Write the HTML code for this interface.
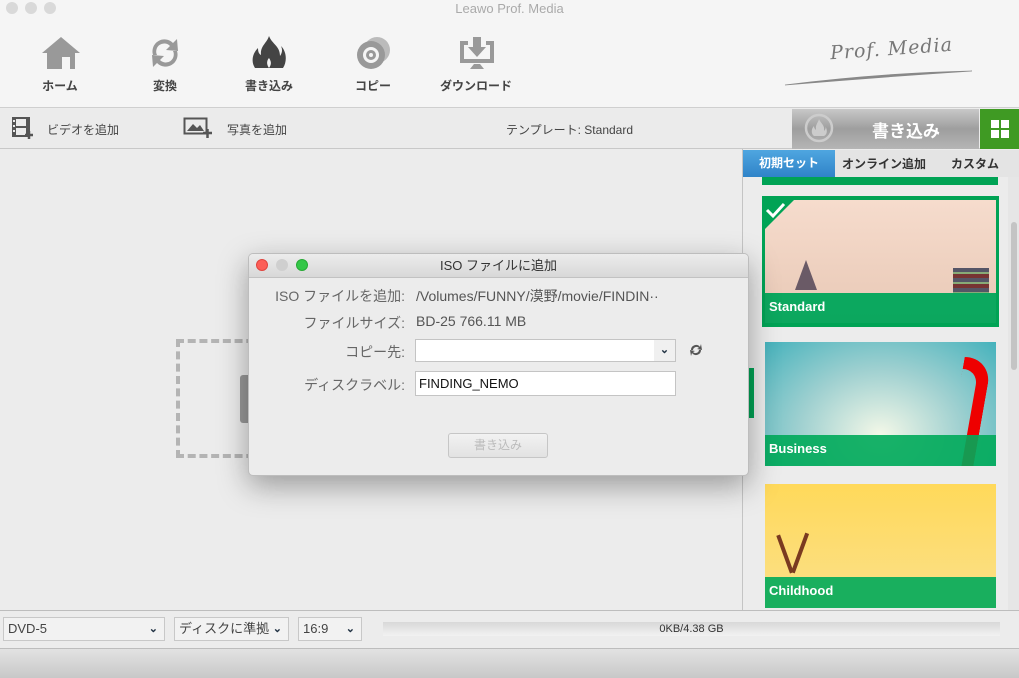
<!DOCTYPE html>
<html><head><meta charset="utf-8"><style>
*{margin:0;padding:0;box-sizing:border-box}
body{width:1019px;height:678px;position:relative;overflow:hidden;background:#ececec;font-family:"Liberation Sans","Noto Sans CJK JP",sans-serif;color:#444}
.a{position:absolute}
.tl{width:12px;height:12px;border-radius:50%;background:#d9d9d9;top:2px}
.tb{font-size:12px;color:#444;text-align:center;width:80px;font-weight:bold}
.sel{background:#f2f2f2;border:1px solid #c8c8c8;font-size:13px;color:#444;height:24px;line-height:22px;padding-left:4px}
.sel b{position:absolute;right:6px;top:0;font-size:11px;color:#234}
.card{left:765px;width:231px;overflow:hidden}
.lab{position:absolute;left:0;right:0;bottom:0;height:30px;background:rgba(0,170,90,.9);color:#fff;font-size:13px;font-weight:bold;padding:6px 4px}
.dl{font-size:14px;color:#666;text-align:right;width:160px;left:248px}
</style></head><body>
<div class="a" style="left:0;top:0;width:1019px;height:108px;background:#f5f5f5;border-bottom:1px solid #cfcfcf"></div>
<div class="a tl" style="left:6px"></div><div class="a tl" style="left:25px"></div><div class="a tl" style="left:44px"></div>
<div class="a" style="left:0;top:1px;width:1019px;text-align:center;font-size:13px;color:#aaa">Leawo Prof. Media</div>
<svg class="a" style="left:40px;top:35px" width="42" height="36"><path d="M21 2 L2 18 L7 18 L7 34 L35 34 L35 18 L40 18 Z" fill="#999"/><rect x="22" y="22" width="8" height="12" fill="#f5f5f5"/></svg>
<svg class="a" style="left:147px;top:35px" width="36" height="36"><path d="M6 20 A12 12 0 0 1 26 8 L30 4 L31 16 L19 15 L23 11 A8 8 0 0 0 10 20 Z" fill="#999"/><path d="M30 16 A12 12 0 0 1 10 28 L6 32 L5 20 L17 21 L13 25 A8 8 0 0 0 26 16 Z" fill="#999"/></svg>
<svg class="a" style="left:250px;top:34px" width="38" height="38"><path d="M19 2 C22 10 30 12 30 22 C33 18 32 14 31 12 C37 18 37 28 33 34 L5 34 C1 28 2 20 8 14 C8 18 9 20 11 21 C10 12 17 9 19 2Z" fill="#444"/><path d="M19 34 C16 30 17 26 19 24 C21 27 22 30 19 34Z" fill="#f5f5f5"/></svg>
<svg class="a" style="left:355px;top:35px" width="36" height="36"><circle cx="22" cy="15" r="13" fill="#bbb"/><circle cx="16" cy="20" r="14" fill="#999"/><circle cx="16" cy="20" r="8" fill="#f5f5f5"/><circle cx="16" cy="20" r="5" fill="#999"/><circle cx="16" cy="20" r="2" fill="#f5f5f5"/></svg>
<svg class="a" style="left:458px;top:35px" width="38" height="36"><path d="M2 6 L2 28 L36 28 L36 6 L28 6 L28 10 L32 10 L32 24 L6 24 L6 10 L10 10 L10 6Z" fill="#999"/><path d="M15 2 L23 2 L23 12 L28 12 L19 22 L10 12 L15 12Z" fill="#999"/><path d="M12 34 L16 29 L22 29 L26 34Z" fill="#999"/></svg>
<div class="a tb" style="left:20px;top:77px">ホーム</div>
<div class="a tb" style="left:125px;top:77px">変換</div>
<div class="a tb" style="left:229px;top:77px">書き込み</div>
<div class="a tb" style="left:333px;top:77px">コピー</div>
<div class="a tb" style="left:436px;top:77px">ダウンロード</div>
<div class="a" style="left:830px;top:38px;font-family:'DejaVu Serif',serif;font-style:italic;font-size:19px;color:#777;letter-spacing:1px;transform:rotate(-4deg)">Prof. Media</div>
<svg class="a" style="left:780px;top:65px" width="200" height="25"><path d="M5 20 Q100 8 192 6 Q100 12 5 20Z" fill="#888" stroke="#888" stroke-width=".8"/></svg>
<div class="a" style="left:0;top:109px;width:1019px;height:40px;background:#ebebeb;border-bottom:1px solid #c8c8c8"></div>
<svg class="a" style="left:11px;top:116px" width="22" height="24"><rect x="1" y="1" width="18" height="20" fill="#555"/><rect x="5" y="3" width="10" height="7" fill="#ebebeb"/><rect x="5" y="12" width="10" height="7" fill="#ebebeb"/><rect x="2" y="4" width="2" height="2" fill="#ebebeb"/><rect x="2" y="9" width="2" height="2" fill="#ebebeb"/><rect x="2" y="14" width="2" height="2" fill="#ebebeb"/><path d="M14 19h8M18 15v8" stroke="#555" stroke-width="2.5"/></svg>
<div class="a" style="left:47px;top:121px;font-size:12px;color:#444">ビデオを追加</div>
<svg class="a" style="left:183px;top:116px" width="30" height="22"><rect x="1.5" y="2.5" width="22" height="15" fill="none" stroke="#555" stroke-width="2"/><path d="M4 15 L10 8 L14 12 L17 9 L21 15Z" fill="#555"/><path d="M20 17h9M24.5 13v9" stroke="#555" stroke-width="2.5"/></svg>
<div class="a" style="left:227px;top:121px;font-size:12px;color:#444">写真を追加</div>
<div class="a" style="left:506px;top:121px;font-size:12px;color:#444">テンプレート: Standard</div>
<div class="a" style="left:792px;top:109px;width:187px;height:40px;background:linear-gradient(#c8c8c8,#9e9e9e 50%,#b5b5b5)"></div>
<svg class="a" style="left:804px;top:113px" width="30" height="30"><circle cx="15" cy="15" r="13" fill="none" stroke="#ccc" stroke-width="2.5"/><path d="M15 6 C17 11 21 12 20 18 C22 16 22 14 21 13 C24 17 23 22 20 23 L10 23 C7 21 7 16 10 13 C10 15 11 16 12 17 C11 12 14 10 15 6Z" fill="#ccc"/></svg>
<div class="a" style="left:872px;top:117px;font-size:17px;font-weight:bold;color:#fff">書き込み</div>
<div class="a" style="left:980px;top:109px;width:39px;height:40px;background:#3f9a23"></div>
<svg class="a" style="left:990px;top:119px" width="20" height="20"><rect x="1" y="1" width="8" height="8" fill="#fff"/><rect x="11" y="1" width="8" height="8" fill="#fff"/><rect x="1" y="11" width="8" height="8" fill="#fff"/><rect x="11" y="11" width="8" height="8" fill="#fff"/></svg>
<div class="a" style="left:742px;top:149px;width:277px;height:461px;background:#ececec;border-left:1px solid #c4c4c4"></div>
<div class="a" style="left:743px;top:150px;width:276px;height:27px;background:#e4e4e4"></div>
<div class="a" style="left:743px;top:150px;width:92px;height:27px;background:linear-gradient(#4fa6e0,#2f83c8);color:#fff;font-size:12px;font-weight:bold;text-align:center;line-height:27px">初期セット</div>
<div class="a" style="left:842px;top:155px;font-size:12px;font-weight:bold;color:#333">オンライン追加</div>
<div class="a" style="left:951px;top:155px;font-size:12px;font-weight:bold;color:#333">カスタム</div>
<div class="a" style="left:1008px;top:177px;width:11px;height:433px;background:#e6e6e6"></div>
<div class="a" style="left:1011px;top:222px;width:6px;height:148px;background:#c4c4c4;border-radius:3px"></div>
<div class="a" style="left:762px;top:177px;width:236px;height:8px;background:#00a355"></div>
<div class="a" style="left:762px;top:196px;width:237px;height:131px;background:#00a355"></div>
<div class="a card" style="top:200px;height:123px;background:linear-gradient(#f6dccd,#e8c8b5)">
<div class="a" style="left:30px;top:60px;width:22px;height:30px;background:#6a5a66;clip-path:polygon(50% 0,100% 100%,0 100%)"></div>
<div class="a" style="left:188px;top:68px;width:36px;height:25px;background:repeating-linear-gradient(#556 0 4px,#8a7 4px 6px,#733 6px 10px)"></div>
<div class="lab" style="background:rgba(0,165,90,.95)">Standard</div></div>
<svg class="a" style="left:762px;top:196px" width="40" height="40"><path d="M0 0 H36 L0 36Z" fill="#00a355"/><path d="M5 14 L11 20 L22 8" stroke="#fff" stroke-width="3" fill="none"/></svg>
<div class="a card" style="top:342px;height:124px;background:radial-gradient(ellipse at 50% 75%,#f4f8e8,#9fd0d0 50%,#45b2bc)">
<div class="a" style="left:190px;top:15px;width:28px;height:110px;border:12px solid #e00;border-left:none;border-bottom:none;border-radius:0 60px 0 0;transform:skewX(-10deg)"></div>
<div class="lab" style="height:31px">Business</div></div>
<div class="a card" style="top:484px;height:124px;background:linear-gradient(#ffd95a,#fbe08a)">
<div class="a" style="left:18px;top:50px;width:4px;height:40px;background:#7a3a20;transform:rotate(-20deg)"></div><div class="a" style="left:33px;top:48px;width:4px;height:42px;background:#7a3a20;transform:rotate(20deg)"></div>
<div class="lab" style="height:31px">Childhood</div></div>
<div class="a" style="left:176px;top:339px;width:90px;height:119px;border:4px dashed #b4b4b4"></div>
<div class="a" style="left:240px;top:375px;width:20px;height:48px;background:#999;border-radius:3px"></div>
<div class="a" style="left:748px;top:368px;width:6px;height:50px;background:#00a355"></div>
<div class="a" style="left:248px;top:253px;width:501px;height:223px;background:#ececec;border:1px solid #bdbdbd;border-radius:5px;box-shadow:0 10px 30px rgba(0,0,0,.35);overflow:hidden">
<div style="height:24px;background:linear-gradient(#ececec,#d8d8d8);border-bottom:1px solid #c2c2c2;text-align:center;font-size:13px;line-height:24px;color:#333">ISO ファイルに追加</div></div>
<div class="a" style="left:256px;top:259px;width:12px;height:12px;border-radius:50%;background:#fc5e57;border:1px solid #e0443e"></div>
<div class="a" style="left:276px;top:259px;width:12px;height:12px;border-radius:50%;background:#cfcfcf"></div>
<div class="a" style="left:296px;top:259px;width:12px;height:12px;border-radius:50%;background:#34c748;border:1px solid #27aa35"></div>
<div class="a dl" style="top:286px;width:157px">ISO ファイルを追加:</div>
<div class="a" style="left:416px;top:286px;font-size:14px;color:#555">/Volumes/FUNNY/漠野/movie/FINDIN··</div>
<div class="a dl" style="top:313px;width:157px">ファイルサイズ:</div>
<div class="a" style="left:416px;top:313px;font-size:14px;color:#555">BD-25 766.11 MB</div>
<div class="a dl" style="top:342px;width:157px">コピー先:</div>
<div class="a" style="left:415px;top:339px;width:261px;height:23px;background:#fff;border:1px solid #c4c4c4"></div>
<div class="a" style="left:654px;top:340px;width:21px;height:21px;background:#f0f0f0;font-size:11px;color:#234;text-align:center;line-height:21px;font-weight:bold">⌄</div>
<svg class="a" style="left:688px;top:342px" width="16" height="16"><path d="M3 8 A5 5 0 0 1 12 5 L13 2 L14 8 L9 7 L11 6 A3.5 3.5 0 0 0 5 8Z M13 8 A5 5 0 0 1 4 11 L3 14 L2 8 L7 9 L5 10 A3.5 3.5 0 0 0 11 8Z" fill="#555"/></svg>
<div class="a dl" style="top:375px;width:157px">ディスクラベル:</div>
<div class="a" style="left:415px;top:371px;width:261px;height:25px;background:#fff;border:1px solid #c4c4c4;font-size:13px;color:#111;padding:4px 3px">FINDING_NEMO</div>
<div class="a" style="left:448px;top:433px;width:100px;height:25px;background:linear-gradient(#f2f2f2,#e2e2e2);border:1px solid #c6c6c6;border-radius:3px;font-size:12px;color:#bbb;text-align:center;line-height:23px">書き込み</div>
<div class="a" style="left:0;top:610px;width:1019px;height:39px;background:#ececec;border-top:1px solid #bdbdbd;border-bottom:1px solid #bdbdbd"></div>
<div class="a sel" style="left:3px;top:617px;width:162px">DVD-5<b>⌄</b></div>
<div class="a sel" style="left:174px;top:617px;width:115px">ディスクに準拠<b>⌄</b></div>
<div class="a sel" style="left:298px;top:617px;width:64px">16:9<b>⌄</b></div>
<div class="a" style="left:383px;top:622px;width:617px;height:14px;background:linear-gradient(#d8d8d8,#f2f2f2);font-size:11px;color:#333;text-align:center;line-height:14px">0KB/4.38 GB</div>
<div class="a" style="left:0;top:649px;width:1019px;height:29px;background:linear-gradient(#e2e2e2,#c8c8c8)"></div>
</body></html>
